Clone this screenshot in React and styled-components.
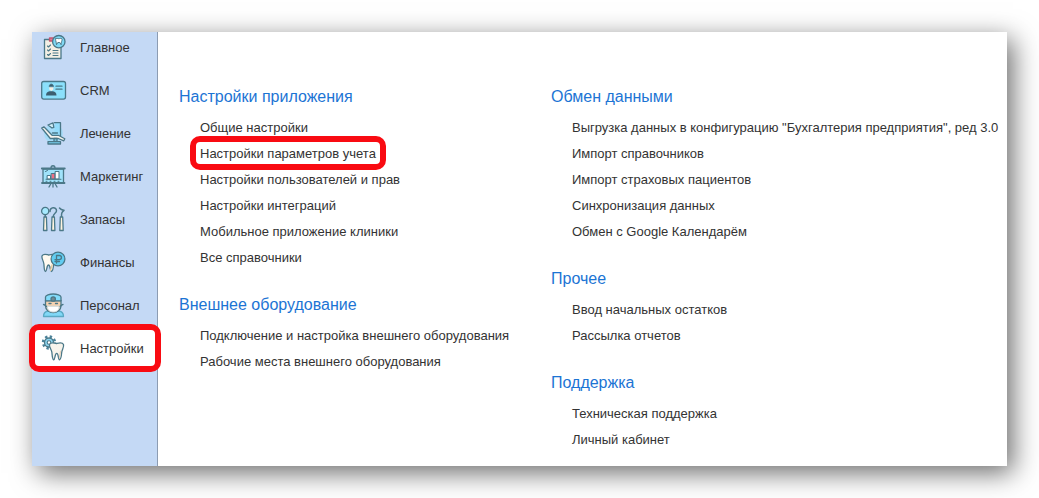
import React from "react";
import styled, { createGlobalStyle } from "styled-components";

const GlobalStyle = createGlobalStyle`
  * {
    box-sizing: border-box;
  }
  body {
    margin: 0;
    background: #fff;
    color: #333;
    font-family: "Liberation Sans", Arial, sans-serif;
    font-size: 13px;
  }
  a {
    color: inherit;
    text-decoration: none;
  }
  ul {
    list-style: none;
    margin: 0;
    padding: 0;
  }
`;

const Page = styled.div`
  display: flex;
  min-height: 100vh;
  padding: 32px;
`;

const Panel = styled.div`
  display: flex;
  flex: 1;
  background: #fff;
  box-shadow: 6px 7px 25px rgba(0, 0, 0, 0.58);
`;

const Sidebar = styled.nav`
  flex: none;
  width: 126px;
  background: #c4d9f5;
  border-right: 1px solid #8c9cb2;

  ul {
    margin-top: -6px;
  }
`;

const NavLink = styled.a`
  position: relative;
  display: flex;
  align-items: center;
  gap: 12px;
  height: 43px;
  padding-left: 7px;
  background: ${(props) => (props.$active ? "#fff" : "transparent")};
`;

const Icon = styled.svg`
  flex: none;
  width: 29px;
  height: 29px;
  fill: none;
  stroke: #4b7888;
  stroke-width: 1.3;
  stroke-linecap: round;
  stroke-linejoin: round;
`;

const Ring = styled.span`
  position: absolute;
  inset: ${(props) => props.$inset};
  border: 6px solid #f90b12;
  border-radius: 10px;
  pointer-events: none;
`;

const Content = styled.main`
  flex: 1;
  display: grid;
  grid-template-columns: minmax(0, 372px) 1fr;
  align-items: start;
  padding: 52px 0 12px 21px;
`;

const Column = styled.div`
  display: grid;
  gap: 21px;
`;

const Heading = styled.h2`
  margin: 0 0 5px;
  color: #1c74d4;
  font-size: 16px;
  font-weight: 400;
  line-height: 26px;
`;

const LinkItem = styled.li`
  padding-left: 21px;
  line-height: 26px;
  white-space: nowrap;

  a {
    position: relative;
    display: inline-block;
  }
`;

const HomeIcon = () => (
  <Icon viewBox="0 0 29 29">
    <path d="M5.500 6.500H22V25.500H5.500z" fill="#f3efe4" />
    <path d="M10.500 8V5h5v3z" fill="#e8798f" stroke="#c2566f" />
    <path d="M8.500 13l1 1 2-2M8.500 17l1 1 2-2M8.500 21.500l1 1 2-2M14 17.500h5M14 20h5M14 22.500h5" strokeWidth="1.100" />
    <circle cx="19.800" cy="8.700" r="6.200" fill="#7fd9f5" />
    <path d="M16.800 5.700c1-.8 2 0 3 0s2-.8 3 0c.8 1.400-.4 2-.7 6l-1.300-2.200h-2l-1.300 2.200c-.3-4-1.500-4.600-.7-6z" fill="#fff" strokeWidth="1" />
  </Icon>
);

const CrmIcon = () => (
  <Icon viewBox="0 0 29 29">
    <rect x="2.700" y="5.500" width="23.800" height="17.600" rx="2" fill="#8be0fb" />
    <path d="M7 19.500c0-3 1.500-4 3.500-4.300h3.500c2 .3 3.500 1.300 3.500 4.300z" fill="#3c5f70" stroke="none" />
    <path d="M10.300 11h4v2.500l-2 1.500-2-1.500z" fill="#f5efe4" stroke="none" />
    <path d="M10.200 10.300c0-3 4.200-3 4.200 0z" fill="#3c5f70" strokeWidth="1" />
    <path d="M17 10.200h6M17 13.200h6" />
  </Icon>
);

const ChairIcon = () => (
  <Icon viewBox="0 0 29 29">
    <circle cx="14.500" cy="14.500" r="9.500" fill="#a5dcf8" stroke="none" />
    <path d="M16 3.700h5.500V17H15z" fill="#93dcfb" stroke="none" />
    <path d="M15.500 3.700h6V17M13.500 14h5" />
    <path d="M9 6l5-2.200.8 4.500-1.800.7z" fill="#d5f2fc" />
    <path d="M2.700 9l2.200-1.200 8.200 8.500h6.200l6.500 3.500-1 2-5.500-2.300h-8z" fill="#f6f4ee" />
    <path d="M15 19.500h3v3.200h-3z" fill="#74bfd7" />
    <path d="M9 22.700h12.500v2.300H9z" fill="#74cfee" />
  </Icon>
);

const MarketingIcon = () => (
  <Icon viewBox="0 0 29 29">
    <path d="M4 7h20.500v14H4z" fill="#a0e3fb" />
    <path d="M2.800 6.500h23M3 21h22.500" strokeWidth="1.800" />
    <path d="M12 6c0-3 4-3 4 0M14 21v4M10 25l2-3.500M18 25l-2-3.500" />
    <path d="M8.500 13.500h3v3.500h-3z" fill="#fff" strokeWidth="1" />
    <path d="M12.500 11.500h3.500v5.500h-3.500z" fill="#ec7185" strokeWidth="1" />
    <path d="M16.500 9.500H20V17h-3.500z" fill="#fff" strokeWidth="1" />
    <path d="M6.500 9.500l2-1M7 17.300h15M7 19.300h1M11 19.300h1M15 19.300h1M19 19.300h1" strokeWidth="1" />
  </Icon>
);

const ToolsIcon = () => (
  <Icon viewBox="0 0 29 29">
    <circle cx="6.200" cy="6" r="3.600" fill="#a7eaff" />
    <path d="M6.200 9.800v2M11 6.500c-.5-4.500 6.500-5 6.500-.8 0 2.700-3.300 2.500-3.300 6M20.500 3c1.500 2 2 2 4.500 2.300-2.500 2-2.500 3-2.500 6.500" strokeWidth="1.500" />
    <path d="M5 12h2.400l.5 13.500H4.500zM13 12h2.400l.5 13.500h-3.400zM21.300 12h2.400l.5 13.500h-3.400z" fill="#fff4df" />
  </Icon>
);

const FinanceIcon = () => (
  <Icon viewBox="0 0 29 29">
    <path d="M3 8c1.500-3 4.500-1.500 6.500-1 2-.5 5.500-2 7 1 .8 2.700-1.500 5-1.800 8-.3 3.500-.7 7-2.200 7.500-1.500 0-1-6.500-3-6.500s-1.500 6.500-3 6.500c-1.500-.5-1.300-4.500-1.600-7.500C4.600 13 2.400 10.500 3 8z" fill="#fffaf0" />
    <path d="M13 17c-.3 3-1.500 4-1.500 5.500" stroke="#e6c99d" />
    <circle cx="19" cy="11" r="6.900" fill="#62cdf2" />
    <path d="M17.500 15V7.500h2.700c3 0 3 4.200 0 4.200H16M16 13.500h4.500" />
  </Icon>
);

const StaffIcon = () => (
  <Icon viewBox="0 0 29 29">
    <path d="M4.500 25.500c0-4 2-5 4.500-5.500h11c2.500.5 4.500 1.500 4.500 5.500z" fill="#81d8f7" stroke="#5aa9c4" />
    <path d="M6.500 9.500h15.500V15c0 4-3.800 6.500-7.800 6.500S6.500 19 6.500 15z" fill="#f4d2b0" />
    <path d="M4.500 13.500c1 0 2 1 3 2M24 13.500c-1 0-2 1-3 2" />
    <path d="M8.500 15.200h11.500c.5 3.500-2 5.800-5.700 5.800s-6.300-2.300-5.800-5.800z" fill="#fff" stroke="#c9d5d8" strokeWidth="1" />
    <path d="M6.500 9.800V6c0-1.800 4-3 7.700-3S22 4.200 22 6v3.800z" fill="#82dbfa" />
    <path d="M10 12.500h2M16.500 12.500h2" />
    <circle cx="14.200" cy="8" r="2.200" fill="#718a93" />
  </Icon>
);

const SettingsIcon = () => (
  <Icon viewBox="0 0 29 29">
    <circle cx="10" cy="8.500" r="5.900" stroke="#4b8299" strokeWidth="2.600" strokeDasharray="2.317 2.317" strokeLinecap="butt" />
    <circle cx="10" cy="8.500" r="4.500" fill="#8cd4ee" />
    <circle cx="10" cy="8.500" r="1.800" fill="#fff" strokeWidth="1.100" />
    <path d="M10.500 10.500c1.300-2.800 4.800-1.500 7-1 2-.5 5.800-1.800 7 1 .8 2.700-1.500 5-1.800 8-.3 3.500-.7 6.800-2.200 7.300-1.500 0-.8-6.500-2.800-6.500s-1.500 6.500-3 6.500c-1.400-.5-1.500-4.300-1.800-7.300-.3-3-3-5.500-2.400-8z" fill="#f8f4ec" />
    <path d="M21.500 17.500c-.2 2.500-1 4-1 6" stroke="#e8d5bf" />
  </Icon>
);

const sections = [
  { title: "Главное", icon: <HomeIcon /> },
  { title: "CRM", icon: <CrmIcon /> },
  { title: "Лечение", icon: <ChairIcon /> },
  { title: "Маркетинг", icon: <MarketingIcon /> },
  { title: "Запасы", icon: <ToolsIcon /> },
  { title: "Финансы", icon: <FinanceIcon /> },
  { title: "Персонал", icon: <StaffIcon /> },
  { title: "Настройки", icon: <SettingsIcon />, active: true },
];

const columns = [
  [
    {
      title: "Настройки приложения",
      links: [
        "Общие настройки",
        "Настройки параметров учета",
        "Настройки пользователей и прав",
        "Настройки интеграций",
        "Мобильное приложение клиники",
        "Все справочники",
      ],
    },
    {
      title: "Внешнее оборудование",
      links: [
        "Подключение и настройка внешнего оборудования",
        "Рабочие места внешнего оборудования",
      ],
    },
  ],
  [
    {
      title: "Обмен данными",
      links: [
        'Выгрузка данных в конфигурацию "Бухгалтерия предприятия", ред 3.0',
        "Импорт справочников",
        "Импорт страховых пациентов",
        "Синхронизация данных",
        "Обмен с Google Календарём",
      ],
    },
    { title: "Прочее", links: ["Ввод начальных остатков", "Рассылка отчетов"] },
    { title: "Поддержка", links: ["Техническая поддержка", "Личный кабинет"] },
  ],
];

const marked = "Настройки параметров учета";

const Group = ({ title, links }) => (
  <section>
    <Heading>{title}</Heading>
    <ul>
      {links.map((link) => (
        <LinkItem key={link}>
          <a href="#">
            {link}
            {link === marked && <Ring $inset="-5px -10px -3px -10px" />}
          </a>
        </LinkItem>
      ))}
    </ul>
  </section>
);

const App = () => (
  <>
    <GlobalStyle />
    <Page>
      <Panel>
        <Sidebar>
          <ul>
            {sections.map(({ title, icon, active }) => (
              <li key={title}>
                <NavLink href="#" $active={active}>
                  {icon}
                  {title}
                  {active && <Ring $inset="-3px -4px -2px -3px" />}
                </NavLink>
              </li>
            ))}
          </ul>
        </Sidebar>
        <Content>
          {columns.map((groups, index) => (
            <Column key={index}>
              {groups.map((group) => (
                <Group key={group.title} {...group} />
              ))}
            </Column>
          ))}
        </Content>
      </Panel>
    </Page>
  </>
);

export default App;
